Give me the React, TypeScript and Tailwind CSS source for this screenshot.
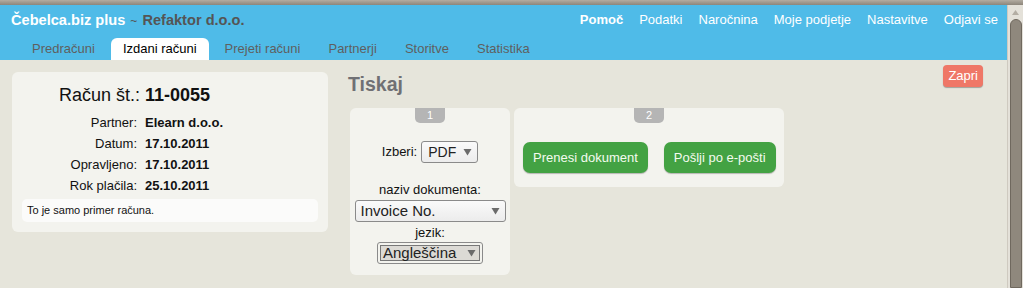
import React from "react";

const Caret = () => (
  <svg width="9" height="8" viewBox="0 0 9 8" className="shrink-0">
    <path d="M0.5 1 L8.5 1 L4.5 7.5 Z" fill="#6b6b6b" />
  </svg>
);

const tabs = ["Predračuni", "Izdani računi", "Prejeti računi", "Partnerji", "Storitve", "Statistika"];
const nav = ["Podatki", "Naročnina", "Moje podjetje", "Nastavitve", "Odjavi se"];
const rows: [string, string][] = [
  ["Partner:", "Elearn d.o.o."],
  ["Datum:", "17.10.2011"],
  ["Opravljeno:", "17.10.2011"],
  ["Rok plačila:", "25.10.2011"],
];

export default function App() {
  return (
    <div
      className="w-[1023px] h-[288px] overflow-hidden flex flex-col"
      style={{ fontFamily: '"Liberation Sans", Arial, sans-serif' }}
    >
      <div className="h-[5px] shrink-0 bg-gradient-to-b from-[#b3aca1] to-[#8d867b]" />
      <div className="flex flex-1 min-h-0">
        <div className="flex-1 flex flex-col min-w-0">
          {/* header */}
          <div className="bg-[#4fbbe8] h-[55px] shrink-0 flex flex-col">
            <div className="h-[30px] flex items-center justify-between pl-[11px] pr-[9px]">
              <div className="text-[14.6px] font-bold leading-none flex items-baseline">
                <span className="text-white">Čebelca.biz plus</span>
                <span className="text-[#555] font-normal text-[12px] mx-[5px]">~</span>
                <span className="text-[#555]">Refaktor d.o.o.</span>
              </div>
              <div className="flex items-center gap-[16px] text-[13px] text-white">
                <span className="font-bold">Pomoč</span>
                {nav.map((n) => (
                  <span key={n}>{n}</span>
                ))}
              </div>
            </div>
            <div className="mt-[3px] h-[22px] flex items-end pl-[20px] gap-[4px] text-[13px]">
              {tabs.map((t, i) =>
                i === 1 ? (
                  <div key={t} className="h-[22px] px-[12px] bg-white rounded-t-[6px] text-black flex items-center">
                    {t}
                  </div>
                ) : (
                  <div key={t} className="h-[22px] px-[12px] text-[#5f5f5f] flex items-center">
                    {t}
                  </div>
                )
              )}
            </div>
          </div>
          {/* body */}
          <div className="flex-1 bg-[#e6e5db] flex items-start pl-[12px] pr-[24px] pt-[5px]">
            {/* invoice card */}
            <div className="mt-[7px] w-[316px] bg-[#f3f3ee] rounded-[6px] px-[10px] pt-[12px] pb-[10px] text-[#111]">
              <div className="flex items-center h-[22px]">
                <div className="w-[118px] text-right text-[18px] leading-none">Račun št.:</div>
                <div className="ml-[5px] text-[18px] font-bold leading-none">11-0055</div>
              </div>
              <div className="mt-[6px]">
                {rows.map(([l, v]) => (
                  <div key={l} className="flex items-center h-[21px] text-[13px]">
                    <div className="w-[115px] text-right">{l}</div>
                    <div className="ml-[8px] font-bold">{v}</div>
                  </div>
                ))}
              </div>
              <div className="mt-[3px] h-[23px] bg-[#fbfbfa] rounded-[5px] px-[5px] flex items-center text-[11px]">
                To je samo primer računa.
              </div>
            </div>
            {/* print section */}
            <div className="ml-[19px] flex flex-col">
              <div className="h-[43px] pt-[10px] text-[19.5px] font-bold text-[#707074] leading-none pl-[1px]">Tiskaj</div>
              <div className="flex items-start gap-[4px] ml-[3px]">
                {/* panel 1 */}
                <div className="w-[160px] bg-[#f3f3ee] rounded-[6px] flex flex-col items-center pb-[11px] text-[13px] text-[#111]">
                  <div className="w-[30px] h-[15px] bg-[#b5b5b5] rounded-b-[5px] text-white text-[11px] flex items-center justify-center leading-none">
                    1
                  </div>
                  <div className="mt-[18px] flex items-center">
                    <span>Izberi:</span>
                    <div className="ml-[4px] w-[57px] h-[22px] border border-[#8a8a8a] rounded-[3px] bg-gradient-to-b from-[#fafafa] to-[#ececec] flex items-center justify-between pl-[6px] pr-[5px] text-[14px] text-[#222]">
                      <span>PDF</span>
                      <Caret />
                    </div>
                  </div>
                  <div className="mt-[19px] h-[16px] leading-[16px]">naziv dokumenta:</div>
                  <div className="mt-[2px] w-[151px] h-[22px] border border-[#8a8a8a] rounded-[3px] bg-gradient-to-b from-[#fafafa] to-[#ececec] flex items-center justify-between pl-[5px] pr-[5px] text-[15px] text-[#222]">
                    <span>Invoice No.</span>
                    <Caret />
                  </div>
                  <div className="mt-[3px] h-[16px] leading-[16px]">jezik:</div>
                  <div className="mt-[1px] w-[106px] h-[22px] border border-[#8a8a8a] rounded-[3px] bg-[#f3f3ee] p-[2px]">
                    <div className="w-full h-full border border-[#777] bg-[#dcdad5] flex items-center justify-between pl-[2px] pr-[3px] text-[15px] text-[#222]">
                      <span>Angleščina</span>
                      <Caret />
                    </div>
                  </div>
                </div>
                {/* panel 2 */}
                <div className="w-[270px] bg-[#f3f3ee] rounded-[6px] flex flex-col items-center pb-[14px]">
                  <div className="w-[30px] h-[15px] bg-[#b5b5b5] rounded-b-[5px] text-white text-[11px] flex items-center justify-center leading-none">
                    2
                  </div>
                  <div className="mt-[19px] self-stretch flex pl-[9px] gap-[16px]">
                    <button className="h-[31px] px-[10px] rounded-[7px] bg-[#43a243] text-[#f4fbef] text-[13px] shadow-[0_1px_1px_rgba(0,0,0,0.25)]">
                      Prenesi dokument
                    </button>
                    <button className="h-[31px] px-[10px] rounded-[7px] bg-[#43a243] text-[#f4fbef] text-[13px] shadow-[0_1px_1px_rgba(0,0,0,0.25)]">
                      Pošlji po e-pošti
                    </button>
                  </div>
                </div>
              </div>
            </div>
            <button className="ml-auto h-[22px] px-[5px] rounded-[4px] bg-[#ef7767] text-white text-[13px] shadow-[0_1px_1px_rgba(0,0,0,0.3)]">
              Zapri
            </button>
          </div>
        </div>
        {/* scrollbar */}
        <div className="w-[16px] shrink-0 bg-[#e4e1d9] border-l border-[#cfcac0] flex flex-col items-center">
          <div className="h-[14px] flex items-center justify-center">
            <svg width="7" height="5" viewBox="0 0 7 5">
              <path d="M0 5 L3.5 0 L7 5 Z" fill="#b3ada3" />
            </svg>
          </div>
          <div className="flex-1 w-[12px] rounded-t-[6px] bg-[#8f887d] border border-[#6f685e]" />
        </div>
      </div>
    </div>
  );
}
